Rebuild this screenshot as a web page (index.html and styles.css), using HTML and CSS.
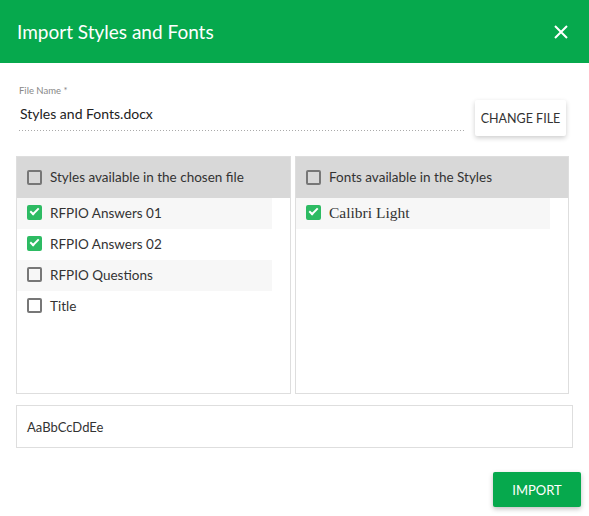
FILE: index.html
```html
<!DOCTYPE html>
<html lang="en">
<head>
    <meta charset="UTF-8">
    <title>Import Styles and Fonts</title>
    <link rel="stylesheet" href="styles.css">
</head>
<body>
    <div class="dialog">
        <div class="dialog-header">
            <h1>Import Styles and Fonts</h1>
            <button class="close-btn" aria-label="Close">
                <svg width="14" height="14" viewBox="0 0 14 14">
                    <path d="M1 1 L13 13 M13 1 L1 13" stroke="#fff" stroke-width="2" fill="none"/>
                </svg>
            </button>
        </div>

        <div class="dialog-body">
            <div class="file-row">
                <div class="file-field">
                    <label class="field-label">File Name *</label>
                    <div class="field-value">Styles and Fonts.docx</div>
                </div>
                <button class="btn btn-light">CHANGE FILE</button>
            </div>

            <div class="panels">
                <div class="panel">
                    <div class="panel-header">
                        <span class="check"></span>
                        <span>Styles available in the chosen file</span>
                    </div>
                    <ul class="item-list">
                        <li class="item shaded"><span class="check checked"></span>RFPIO Answers 01</li>
                        <li class="item"><span class="check checked"></span>RFPIO Answers 02</li>
                        <li class="item shaded"><span class="check"></span>RFPIO Questions</li>
                        <li class="item"><span class="check"></span>Title</li>
                    </ul>
                </div>
                <div class="panel">
                    <div class="panel-header">
                        <span class="check"></span>
                        <span>Fonts available in the Styles</span>
                    </div>
                    <ul class="item-list">
                        <li class="item shaded font-item"><span class="check checked"></span>Calibri Light</li>
                    </ul>
                </div>
            </div>

            <div class="preview">AaBbCcDdEe</div>
        </div>

        <div class="dialog-footer">
            <button class="btn btn-primary">IMPORT</button>
        </div>
    </div>
</body>
</html>
```

FILE: styles.css
```css
body {
    margin: 0;
    font-family: Lato, "Liberation Sans", sans-serif;
    color: #333;
    background: #fff;
}

.dialog {
    width: 589px;
    height: 516px;
    background: white;
    display: flex;
    flex-direction: column;
}

.dialog-header {
    background: #06a94d;
    height: 63px;
    display: flex;
    align-items: center;
    justify-content: space-between;
    padding: 0 21px 0 17px;
}

.dialog-header h1 {
    margin: 0;
    color: white;
    font-size: 19px;
    font-weight: 400;
}

.close-btn {
    background: none;
    border: none;
    padding: 0;
    display: flex;
    cursor: pointer;
}

.dialog-body {
    padding: 0 17px 0 16px;
}

.file-row {
    display: flex;
    align-items: flex-start;
    margin-top: 22px;
    height: 71px;
}

.file-field {
    width: 445px;
    padding-left: 3px;
}

.field-label {
    display: block;
    font-size: 9.5px;
    color: #888;
    height: 14px;
}

.field-value {
    font-size: 14px;
    color: #222;
    padding: 6px 0 9px 1px;
    background-image: linear-gradient(to right, #aaa 1px, transparent 1px);
    background-size: 3px 1px;
    background-repeat: repeat-x;
    background-position: left bottom;
}

.btn {
    font-family: inherit;
    border: none;
    border-radius: 2px;
    cursor: pointer;
    font-size: 13px;
    white-space: nowrap;
    padding: 0;
}

.btn-light {
    margin: 15px 0 0 11px;
    width: 91px;
    height: 36px;
    background: white;
    color: #333;
    font-size: 12.5px;
    box-shadow: 0 2px 5px rgba(0,0,0,0.2);
}

.btn-primary {
    width: 88px;
    height: 35px;
    background: #06a94d;
    color: white;
    box-shadow: 0 2px 5px rgba(0,0,0,0.25);
}

.panels {
    display: grid;
    grid-template-columns: 275px 274px;
    gap: 4px;
    height: 238px;
}

.panel {
    border: 1px solid #dedede;
}

.panel-header {
    background: #d8d8d8;
    height: 40px;
    padding: 0 0 1px 10px;
    display: flex;
    align-items: center;
    font-size: 13.5px;
    color: #333;
}

.check {
    width: 11px;
    height: 11px;
    border: 2px solid #777;
    border-radius: 2px;
    margin-right: 8px;
    flex-shrink: 0;
    display: inline-block;
    position: relative;
}

.check.checked {
    background: #2dbb63;
    border-color: #2dbb63;
}

.check.checked::after {
    content: "";
    position: absolute;
    left: 1px;
    top: 1px;
    width: 7px;
    height: 3px;
    border-left: 2px solid white;
    border-bottom: 2px solid white;
    transform: rotate(-45deg);
}

.item-list {
    list-style: none;
    margin: 0;
    padding: 0 18px 0 0;
}

.item {
    height: 29px;
    padding-bottom: 2px;
    display: flex;
    align-items: center;
    padding-left: 10px;
    font-size: 13.5px;
}

.item.shaded {
    background: #f7f7f7;
}

.font-item {
    font-family: "Liberation Serif", serif;
    font-size: 15.5px;
}

.preview {
    margin-top: 11px;
    width: 545px;
    height: 41px;
    border: 1px solid #dedede;
    display: flex;
    align-items: center;
    padding-left: 10px;
    font-size: 13px;
}

.dialog-footer {
    display: flex;
    justify-content: flex-end;
    padding: 24px 8px 0 0;
}
```
